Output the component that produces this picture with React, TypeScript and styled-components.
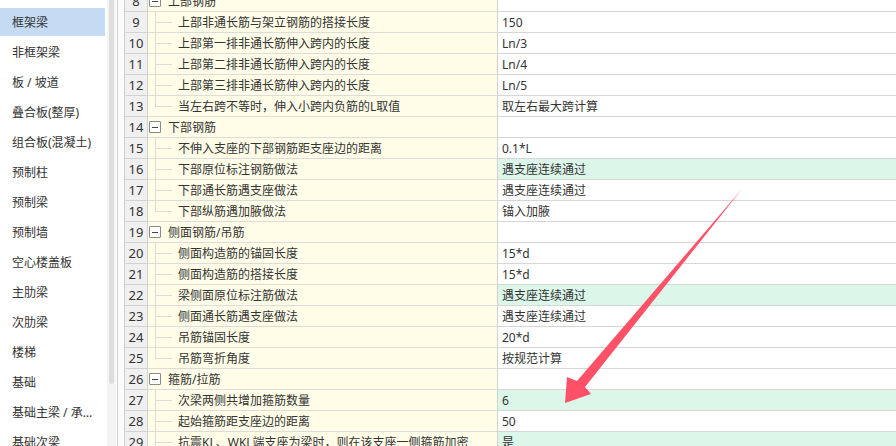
import React from "react";
import styled, { createGlobalStyle } from "styled-components";

const GlobalStyle = createGlobalStyle`
  html, body {
    margin: 0;
    padding: 0;
    overflow: hidden;
    background: #ffffff;
  }
  body {
    font-family: "Noto Sans", "Noto Sans CJK SC", sans-serif;
    font-size: 12px;
    color: #333333;
  }
`;

type RowData = {
  no: number;
  name: string;
  value?: string;
  group?: boolean;
  last?: boolean;
  green?: boolean;
};

const menuItems = [
  "框架梁",
  "非框架梁",
  "板 / 坡道",
  "叠合板(整厚)",
  "组合板(混凝土)",
  "预制柱",
  "预制梁",
  "预制墙",
  "空心楼盖板",
  "主肋梁",
  "次肋梁",
  "楼梯",
  "基础",
  "基础主梁 / 承台梁",
  "基础次梁",
];

const rows: RowData[] = [
  { no: 8, name: "上部钢筋", group: true },
  { no: 9, name: "上部非通长筋与架立钢筋的搭接长度", value: "150" },
  { no: 10, name: "上部第一排非通长筋伸入跨内的长度", value: "Ln/3" },
  { no: 11, name: "上部第二排非通长筋伸入跨内的长度", value: "Ln/4" },
  { no: 12, name: "上部第三排非通长筋伸入跨内的长度", value: "Ln/5" },
  { no: 13, name: "当左右跨不等时，伸入小跨内负筋的L取值", value: "取左右最大跨计算", last: true },
  { no: 14, name: "下部钢筋", group: true },
  { no: 15, name: "不伸入支座的下部钢筋距支座边的距离", value: "0.1*L" },
  { no: 16, name: "下部原位标注钢筋做法", value: "遇支座连续通过", green: true },
  { no: 17, name: "下部通长筋遇支座做法", value: "遇支座连续通过" },
  { no: 18, name: "下部纵筋遇加腋做法", value: "锚入加腋", last: true },
  { no: 19, name: "侧面钢筋/吊筋", group: true },
  { no: 20, name: "侧面构造筋的锚固长度", value: "15*d" },
  { no: 21, name: "侧面构造筋的搭接长度", value: "15*d" },
  { no: 22, name: "梁侧面原位标注筋做法", value: "遇支座连续通过", green: true },
  { no: 23, name: "侧面通长筋遇支座做法", value: "遇支座连续通过" },
  { no: 24, name: "吊筋锚固长度", value: "20*d" },
  { no: 25, name: "吊筋弯折角度", value: "按规范计算", last: true },
  { no: 26, name: "箍筋/拉筋", group: true },
  { no: 27, name: "次梁两侧共增加箍筋数量", value: "6", green: true },
  { no: 28, name: "起始箍筋距支座边的距离", value: "50" },
  { no: 29, name: "抗震KL、WKL端支座为梁时，则在该支座一侧箍筋加密", value: "是", green: true },
];

const Page = styled.div`
  position: relative;
  display: flex;
  width: 896px;
  height: 446px;
  overflow: hidden;
`;

const Sidebar = styled.div`
  width: 107px;
  flex-shrink: 0;
  padding-top: 8px;
  background: #ffffff;
`;

const MenuItem = styled.div<{ $active?: boolean }>`
  height: 28px;
  margin-bottom: 2px;
  width: 105px;
  box-sizing: border-box;
  padding: 0 10px 0 12px;
  display: flex;
  align-items: center;
  background: ${(p) => (p.$active ? "#c4dbf3" : "transparent")};
  color: #333333;
  font-size: 12px;
  span {
    white-space: nowrap;
    overflow: hidden;
    text-overflow: ellipsis;
  }
`;

const ScrollTrack = styled.div`
  width: 9px;
  flex-shrink: 0;
  background: #f4f4f4;
  padding: 0 2px;
  box-sizing: border-box;
`;

const ScrollThumb = styled.div`
  width: 5px;
  height: 384px;
  border-radius: 0 0 3px 3px;
  background: #dedede;
`;

const Splitter = styled.div`
  width: 8px;
  flex-shrink: 0;
  box-sizing: border-box;
  margin-left: 1px;
  border-left: 1px solid #cfcfcf;
  border-right: 1px solid #cfcfcf;
  background: #fbfbfb;
`;

const Grid = styled.div`
  flex: 1;
  margin-top: -9px;
`;

const Row = styled.div`
  display: grid;
  grid-template-columns: 23px 350px 1fr;
  height: 21px;
`;

const NumCell = styled.div`
  background: #f0f0f0;
  border-right: 1px solid #d2d2d2;
  border-bottom: 1px solid #d2d2d2;
  display: flex;
  align-items: center;
  justify-content: center;
  font-size: 13px;
  color: #333333;
`;

const NameCell = styled.div`
  position: relative;
  background: #fffde8;
  border-right: 1px solid #d2d2d2;
  border-bottom: 1px solid #dcdcdc;
  display: flex;
  align-items: center;
  white-space: nowrap;
  overflow: hidden;
`;

const ValueCell = styled.div<{ $green?: boolean }>`
  background: ${(p) => (p.$green ? "#dcf6ea" : "#ffffff")};
  border-bottom: 1px solid #d6d6d6;
  display: flex;
  align-items: center;
  padding-left: 4px;
  white-space: nowrap;
`;

const ToggleBox = styled.div`
  width: 10px;
  height: 10px;
  margin: 0 7px 0 1px;
  flex-shrink: 0;
  border: 1px solid #8a8a8a;
  border-radius: 1px;
  background: #ffffff;
  display: flex;
  align-items: center;
  justify-content: center;
  &::after {
    content: "";
    width: 6px;
    height: 1px;
    background: #444444;
  }
`;

const TreeLine = styled.div<{ $last?: boolean }>`
  width: 23px;
  height: 100%;
  flex-shrink: 0;
  margin-left: 7px;
  position: relative;
  &::before {
    content: "";
    position: absolute;
    left: 0;
    top: 0;
    width: 1px;
    height: ${(p) => (p.$last ? "50%" : "100%")};
    background: #dcdcdc;
  }
  &::after {
    content: "";
    position: absolute;
    left: 0;
    top: 50%;
    width: 17px;
    height: 1px;
    background: #dcdcdc;
  }
`;

const ArrowLayer = styled.svg`
  position: absolute;
  left: 0;
  top: 0;
  pointer-events: none;
`;

function TableRow({ row }: { row: RowData }) {
  return (
    <Row>
      <NumCell>{row.no}</NumCell>
      <NameCell>
        {row.group ? <ToggleBox /> : <TreeLine $last={row.last} />}
        <span>{row.name}</span>
      </NameCell>
      <ValueCell $green={row.green}>{row.value}</ValueCell>
    </Row>
  );
}

export default function App() {
  return (
    <>
      <GlobalStyle />
      <Page>
        <Sidebar>
          {menuItems.map((m, i) => (
            <MenuItem key={m} $active={i === 0}>
              <span>{m}</span>
            </MenuItem>
          ))}
        </Sidebar>
        <ScrollTrack>
          <ScrollThumb />
        </ScrollTrack>
        <Splitter />
        <Grid>
          {rows.map((r) => (
            <TableRow key={r.no} row={r} />
          ))}
        </Grid>
        <ArrowLayer width="896" height="446" viewBox="0 0 896 446">
          <polygon
            points="742,189 585,387 591,394 565,403 567,377 577,381"
            fill="#fe5066"
          />
        </ArrowLayer>
      </Page>
    </>
  );
}
